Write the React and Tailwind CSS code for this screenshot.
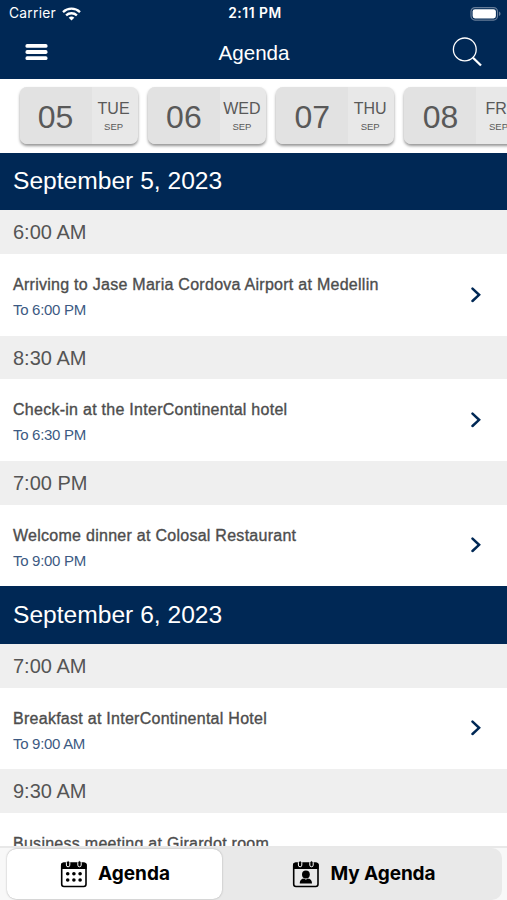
import React from 'react';

const dates = [
  { num: '05', day: 'TUE', month: 'SEP' },
  { num: '06', day: 'WED', month: 'SEP' },
  { num: '07', day: 'THU', month: 'SEP' },
  { num: '08', day: 'FRI', month: 'SEP' },
];

const schedule = [
  {
    title: 'September 5, 2023',
    slots: [
      { time: '6:00 AM', name: 'Arriving to Jase Maria Cordova Airport at Medellin', end: 'To 6:00 PM' },
      { time: '8:30 AM', name: 'Check-in at the InterContinental hotel', end: 'To 6:30 PM' },
      { time: '7:00 PM', name: 'Welcome dinner at Colosal Restaurant', end: 'To 9:00 PM' },
    ],
  },
  {
    title: 'September 6, 2023',
    slots: [
      { time: '7:00 AM', name: 'Breakfast at InterContinental Hotel', end: 'To 9:00 AM' },
      { time: '9:30 AM', name: 'Business meeting at Girardot room', end: 'To 11:00 AM' },
    ],
  },
];

function StatusBar() {
  return (
    <div className="grid h-[28px] grid-cols-3 items-center pl-[9px] pr-[6px] font-['Inter',sans-serif] text-[13.8px] leading-none">
      <div className="flex items-center gap-[6px] tracking-[0.25px]">
        Carrier
        <svg width="19" height="14" viewBox="0 0 19 14" fill="none" stroke="white" strokeWidth="2.3">
          <path d="M1 5.1C5.8.5 13.2.5 18 5.1" />
          <path d="M4.1 8.4c3-2.9 7.8-2.9 10.8 0" />
          <path d="M9.5 13.5 6.7 10.7c1.6-1.5 4-1.5 5.6 0z" fill="white" stroke="none" />
        </svg>
      </div>
      <div className="text-center font-semibold tracking-[0.55px]">2:11 PM</div>
      <div className="flex justify-end">
        <svg width="31" height="15" viewBox="0 0 31 15" fill="none">
          <rect x="1" y="0.6" width="26.5" height="12.5" rx="4" stroke="#667c98" strokeWidth="1.2" />
          <rect x="2.6" y="2.2" width="23.3" height="9.3" rx="2.4" fill="white" />
          <path d="M29 4.6c2 .8 2 3.7 0 4.5z" fill="#667c98" />
        </svg>
      </div>
    </div>
  );
}

function Header() {
  return (
    <header className="h-[79px] shrink-0 bg-[#002855] text-white">
      <StatusBar />
      <div className="grid h-[49px] grid-cols-[1fr_auto_1fr] items-center pl-[25px] pr-[24px]">
        <svg width="23" height="18" viewBox="0 0 23 18" fill="white">
          <rect x="0.5" y="0" width="22" height="3.8" rx="1.6" />
          <rect x="0.5" y="6.1" width="22" height="3.8" rx="1.6" />
          <rect x="0.5" y="12.3" width="22" height="3.8" rx="1.6" />
        </svg>
        <h1 className="pt-[2px] text-[20.6px] leading-none">Agenda</h1>
        <svg className="justify-self-end" width="31" height="31" viewBox="0 0 31 31" fill="none" stroke="white">
          <circle cx="12.8" cy="12.4" r="11.4" strokeWidth="1.3" />
          <path d="m21 20.7 8 7.8" strokeWidth="2.3" />
        </svg>
      </div>
    </header>
  );
}

function DateCard({ date }) {
  return (
    <div className="flex h-[57px] w-[118px] shrink-0 overflow-hidden rounded-[7px] bg-[#e8e8e8] text-[#595959] shadow-[0_2px_3px_rgba(0,0,0,0.42)]">
      <div className="flex w-[72px] items-center justify-center bg-[#e2e2e2] pt-[2px] text-[32px] leading-none">
        {date.num}
      </div>
      <div className="flex w-[46px] flex-col items-center pt-[14px] pr-[2px]">
        <span className="text-[16px] leading-[16px]">{date.day}</span>
        <span className="mt-[5px] text-[9.5px] leading-[10px]">{date.month}</span>
      </div>
    </div>
  );
}

function Slot({ slot }) {
  return (
    <>
      <div className="flex h-[43.6px] items-center bg-[#efefef] px-[13px] pt-[0.5px] text-[20px] leading-none text-[#555]">
        {slot.time}
      </div>
      <div className="flex h-[81.8px] items-center justify-between bg-white pl-[13px] pr-[25px]">
        <div className="pt-[5.5px]">
          <p className="text-[16px] leading-[20px] tracking-[0.27px] whitespace-nowrap text-[#4d4d4d] [-webkit-text-stroke:0.35px_#4d4d4d]">
            {slot.name}
          </p>
          <p className="mt-[5px] text-[15px] leading-[20px] tracking-[-0.3px] text-[#3c5a83]">{slot.end}</p>
        </div>
        <svg width="12" height="16" viewBox="0 0 12 16" fill="none" stroke="#002855" strokeWidth="2.5">
          <path d="m2.5 1.6 6.6 6.2-6.6 6.2" strokeLinecap="round" />
        </svg>
      </div>
    </>
  );
}

function CalendarIcon({ person }) {
  return (
    <svg width="28" height="28" viewBox="0 0 28 28" fill="black">
      <rect x="1.7" y="3.2" width="24.3" height="23.3" rx="2.2" fill="none" stroke="black" strokeWidth="1.6" />
      <path d="M1 5.2Q1 2.4 3.8 2.4h20.1q2.8 0 2.8 2.8V9H1z" />
      {/* binder rings */}
      <g stroke="white" strokeWidth="1">
        <rect x="6.4" y="0.8" width="3.4" height="6" rx="1.7" />
        <rect x="17.8" y="0.8" width="3.4" height="6" rx="1.7" />
      </g>
      {person ? (
        <>
          <circle cx="13.9" cy="14.5" r="3.9" />
          <path d="M7.8 23.5c0-3.5 2-4.8 4.3-5l1.8 1.3 1.8-1.3c2.3.2 4.3 1.5 4.3 5z" />
        </>
      ) : (
        [13.8, 20].map((y) =>
          [7.7, 13.9, 20.1].map((x) => <circle key={`${x}-${y}`} cx={x} cy={y} r="1.8" />)
        )
      )}
    </svg>
  );
}

function TabBar() {
  return (
    <nav className="h-[54px] shrink-0 border-t-2 border-[#e8e8e8] bg-[#f8f8f8] pr-[5px] pl-[7px] font-['Inter',sans-serif] text-[19px] font-bold text-black">
      <div className="flex h-[52px] rounded-[10px] bg-[#e9e9e9]">
        <button className="mt-[1px] flex h-[50px] w-[215px] items-center justify-center gap-[10px] rounded-[9px] bg-white pl-[1px] shadow-[0_0_2px_rgba(0,0,0,0.3)]">
          <CalendarIcon />
          Agenda
        </button>
        <button className="mt-[1px] flex h-[50px] flex-1 items-center justify-center gap-[11px] pl-[3px] tracking-[-0.1px]">
          <CalendarIcon person />
          My Agenda
        </button>
      </div>
    </nav>
  );
}

export default function App() {
  return (
    <div className="flex h-[900px] w-[507px] flex-col overflow-hidden bg-white font-['Liberation_Sans',Arial,sans-serif]">
      <Header />
      <div className="flex h-[73.6px] shrink-0 gap-[10.3px] overflow-hidden pt-[8px] pl-[19.6px]">
        {dates.map((date) => (
          <DateCard key={date.num} date={date} />
        ))}
      </div>
      <main className="min-h-0 flex-1 overflow-hidden">
        {schedule.map((day) => (
          <section key={day.title}>
            <h2 className="flex h-[57.6px] items-center bg-[#002855] px-[13px] text-[24.6px] leading-none text-white">
              {day.title}
            </h2>
            {day.slots.map((slot) => (
              <Slot key={slot.time} slot={slot} />
            ))}
          </section>
        ))}
      </main>
      <TabBar />
    </div>
  );
}
